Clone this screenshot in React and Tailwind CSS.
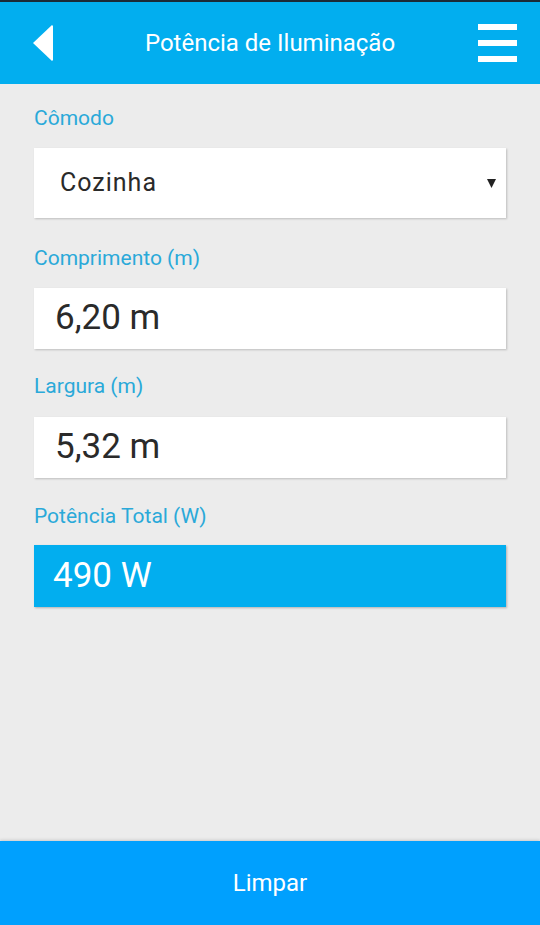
import React from 'react';

function Field({ label, children, top }) {
  return (
    <div className={top}>
      <div className="text-[21px] leading-6 text-[#2aa9d9]">{label}</div>
      {children}
    </div>
  );
}

export default function App() {
  return (
    <div className="flex h-[925px] w-[540px] flex-col bg-[#ececec] font-['Roboto',sans-serif]">
      {/* Header */}
      <header className="flex h-[84px] items-center border-t-2 border-[#1b2a38] bg-[#02aeef] pl-[32px] pr-[23px] text-white">
        <svg width="21" height="38" viewBox="0 0 21 38" className="shrink-0">
          <path d="M1 19 L20 1 L21 2 L21 36 L20 37 Z" fill="white" />
        </svg>
        <h1 className="flex-1 pl-[9px] text-center text-[24px] leading-none font-normal">Potência de Iluminação</h1>
        <div className="flex w-[39px] flex-col gap-[10px]">
          <span className="block h-[6px] bg-white" />
          <span className="block h-[6px] bg-white" />
          <span className="block h-[6px] bg-white" />
        </div>
      </header>

      {/* Form */}
      <main className="flex-1 px-[34px]">
        <Field label="Cômodo" top="mt-[22px]">
          <div className="mt-[18px] flex h-[70px] items-center justify-between bg-white pl-[26px] pr-[10px] shadow-[1px_1px_2px_rgba(0,0,0,0.2)]">
            <span className="text-[25px] tracking-[1px] text-[#2a2a2a]">Cozinha</span>
            <svg width="9" height="9" viewBox="0 0 9 9">
              <path d="M0 0 H9 L4.5 9 Z" fill="#222" />
            </svg>
          </div>
        </Field>

        <Field label="Comprimento (m)" top="mt-[28px]">
          <div className="mt-[18px] flex h-[61px] items-center bg-white pl-[21px] shadow-[1px_1px_2px_rgba(0,0,0,0.2)]">
            <span className="text-[35px] text-[#2a2a2a]">6,20 m</span>
          </div>
        </Field>

        <Field label="Largura (m)" top="mt-[25px]">
          <div className="mt-[19px] flex h-[61px] items-center bg-white pl-[21px] shadow-[1px_1px_2px_rgba(0,0,0,0.2)]">
            <span className="text-[35px] text-[#2a2a2a]">5,32 m</span>
          </div>
        </Field>

        <Field label="Potência Total (W)" top="mt-[26px]">
          <div className="mt-[17px] flex h-[62px] items-center bg-[#02aeef] pl-[19px] shadow-[1px_1px_2px_rgba(0,0,0,0.25)]">
            <span className="text-[35px] text-white">490 W</span>
          </div>
        </Field>
      </main>

      {/* Footer button */}
      <button className="flex h-[84px] w-full items-center justify-center bg-[#00a0fe] text-[24px] text-white shadow-[0_-1px_3px_rgba(0,0,0,0.15)]">
        Limpar
      </button>
    </div>
  );
}
